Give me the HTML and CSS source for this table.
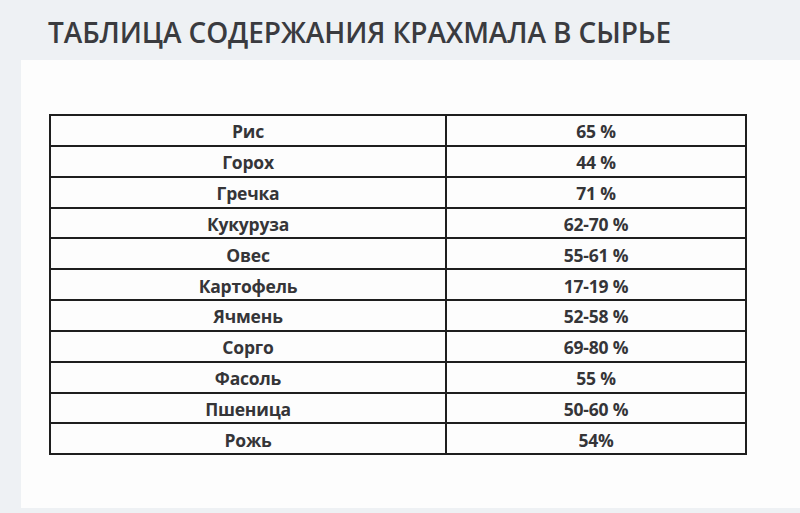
FILE: index.html
```html
<!DOCTYPE html>
<html lang="ru">
<head>
<meta charset="utf-8">
<title>Таблица содержания крахмала в сырье</title>
<link rel="stylesheet" href="styles.css">
</head>
<body>
<h1 class="title">ТАБЛИЦА СОДЕРЖАНИЯ КРАХМАЛА В СЫРЬЕ</h1>
<div class="panel">
  <table class="starch">
    <tbody>
      <tr><td>Рис</td><td>65 %</td></tr>
      <tr><td>Горох</td><td>44 %</td></tr>
      <tr><td>Гречка</td><td>71 %</td></tr>
      <tr><td>Кукуруза</td><td>62-70 %</td></tr>
      <tr><td>Овес</td><td>55-61 %</td></tr>
      <tr><td>Картофель</td><td>17-19 %</td></tr>
      <tr><td>Ячмень</td><td>52-58 %</td></tr>
      <tr><td>Сорго</td><td>69-80 %</td></tr>
      <tr><td>Фасоль</td><td>55 %</td></tr>
      <tr><td>Пшеница</td><td>50-60 %</td></tr>
      <tr><td>Рожь</td><td>54%</td></tr>
    </tbody>
  </table>
</div>
</body>
</html>
```

FILE: styles.css
```css
html, body {
  margin: 0;
  padding: 0;
}
body {
  width: 800px;
  height: 513px;
  overflow: hidden;
  background: #eef1f4;
  font-family: "Open Sans", "Liberation Sans", sans-serif;
}
.title {
  margin: 0;
  height: 60px;
  box-sizing: border-box;
  padding: 13px 0 0 48px;
  font-size: 28px;
  line-height: 38px;
  font-weight: 600;
  letter-spacing: -0.1px;
  color: #3a3b3f;
  white-space: nowrap;
}
.panel {
  margin-left: 21px;
  height: 448px;
  box-sizing: border-box;
  padding: 54px 0 0 28px;
  background: #fdfdfd;
}
.starch {
  width: 698px;
  border-collapse: collapse;
  border: 2px solid #1e1e1e;
  table-layout: fixed;
}
.starch td {
  border: 2px solid #1e1e1e;
  height: 30.85px;
  padding: 2px 0 0;
  text-align: center;
  vertical-align: middle;
  font-size: 17.5px;
  font-weight: 700;
  color: #353538;
  line-height: 22px;
  box-sizing: border-box;
  letter-spacing: -0.2px;
}
.starch td:first-child {
  width: 396px;
}
```
